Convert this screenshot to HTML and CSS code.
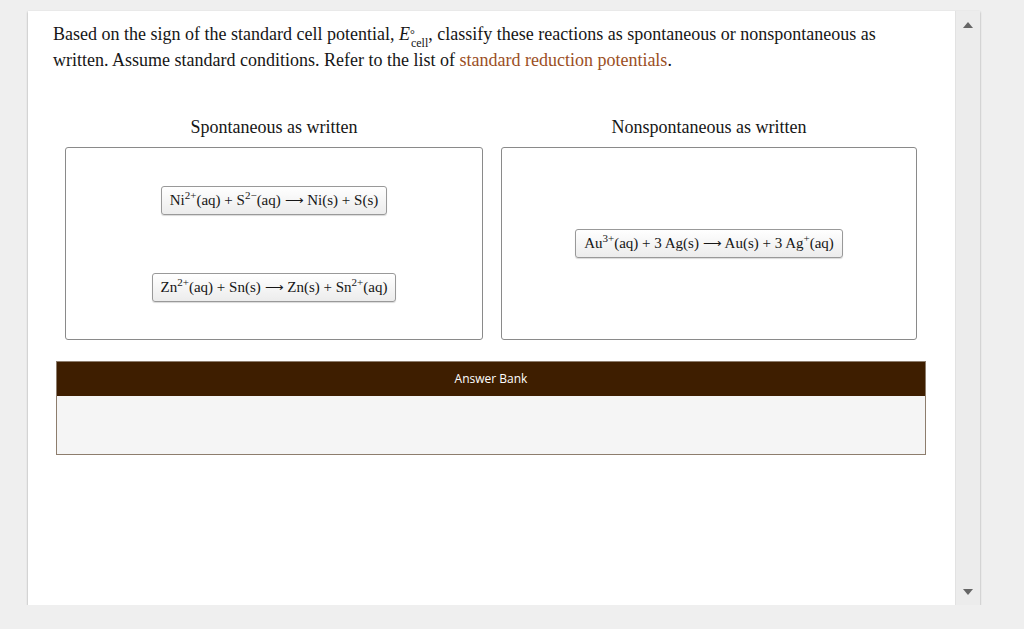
FILE: index.html
```html
<!DOCTYPE html>
<html lang="en">
<head>
    <meta charset="UTF-8">
    <title>Classify Reactions</title>
    <link rel="stylesheet" href="styles.css">
</head>
<body>

    <div class="frame">
        <div class="content">

            <!-- Question -->
            <p class="question">
                Based on the sign of the standard cell potential,
                <span class="ecell"><i>E</i><span class="marks"><span class="deg">°</span><span class="sub">cell</span></span></span>,
                classify these reactions as spontaneous or nonspontaneous as written. Assume standard conditions.
                Refer to the list of <a href="#" class="link">standard reduction potentials</a>.
            </p>

            <!-- Drop zones -->
            <div class="columns">
                <div class="column">
                    <h3 class="col-title">Spontaneous as written</h3>
                    <div class="zone">
                        <div class="chip">Ni<sup>2+</sup>(aq) + S<sup>2&minus;</sup>(aq) <span class="arrow">&#10230;</span> Ni(s) + S(s)</div>
                        <div class="chip">Zn<sup>2+</sup>(aq) + Sn(s) <span class="arrow">&#10230;</span> Zn(s) + Sn<sup>2+</sup>(aq)</div>
                    </div>
                </div>
                <div class="column">
                    <h3 class="col-title">Nonspontaneous as written</h3>
                    <div class="zone">
                        <div class="chip">Au<sup>3+</sup>(aq) + 3 Ag(s) <span class="arrow">&#10230;</span> Au(s) + 3 Ag<sup>+</sup>(aq)</div>
                    </div>
                </div>
            </div>

            <!-- Answer bank -->
            <div class="bank">
                <div class="bank-head">Answer Bank</div>
                <div class="bank-body"></div>
            </div>
        </div>

        <!-- Scrollbar -->
        <div class="scrollbar">
            <span class="tri up"></span>
            <span class="tri down"></span>
        </div>
    </div>

</body>
</html>
```

FILE: styles.css
```css
body {
    margin: 0;
    background: #efefef;
    font-family: "Liberation Serif", "Times New Roman", serif;
    color: #161616;
}

.frame {
    display: flex;
    margin: 11px 0 0 28px;
    width: 952px;
    height: 594px;
    background: #fff;
    box-shadow: 0 1px 2px rgba(0, 0, 0, 0.35);
}

.content {
    flex: 1;
    padding: 11px 0 0 25px;
}

.question {
    margin: 0;
    width: 860px;
    font-size: 18px;
    line-height: 25px;
}

/* E with degree sign over the "cell" subscript */
.ecell i {
    padding-right: 1px;
}

.ecell .marks {
    display: inline-block;
    vertical-align: -7px;
    font-size: 12px;
    line-height: 9px;
}

.ecell .deg,
.ecell .sub {
    display: block;
}

.ecell .deg {
    margin-left: -1px;
}

.link {
    color: #9b4f1f;
    text-decoration: none;
}

.columns {
    display: grid;
    grid-template-columns: 418px 416px;
    gap: 18px;
    margin: 42px 0 0 12px;
}

.col-title {
    margin: 0 0 8px;
    text-align: center;
    font-size: 18px;
    font-weight: normal;
    line-height: 24px;
}

.zone {
    height: 191px;
    border: 1px solid #8a8a8a;
    border-radius: 3px;
    display: flex;
    flex-direction: column;
    align-items: center;
    justify-content: center;
    gap: 58px;
}

.chip {
    height: 27px;
    line-height: 27px;
    padding: 0 8px;
    border: 1px solid #999;
    border-radius: 3px;
    background: linear-gradient(#fff, #ececec);
    box-shadow: 0 1px 1px rgba(0, 0, 0, 0.15);
    font-size: 15px;
    white-space: nowrap;
}

.chip sup {
    font-size: 11px;
    line-height: 0;
}

.arrow {
    font-size: 13px;
}

.bank {
    margin: 21px 0 0 3px;
    width: 868px;
    border: 1px solid #8d7d6d;
}

.bank-head {
    height: 34px;
    line-height: 34px;
    background: #3e1e00;
    color: #fff;
    text-align: center;
    font-family: "Open Sans", sans-serif;
    font-size: 12px;
}

.bank-body {
    height: 58px;
    background: #f5f5f5;
}

.scrollbar {
    width: 24px;
    background: #ececec;
    border-left: 1px solid #e2e2e2;
    display: flex;
    flex-direction: column;
    justify-content: space-between;
    align-items: center;
    padding: 11px 0 10px;
}

.tri {
    width: 0;
    height: 0;
    border-left: 5px solid transparent;
    border-right: 5px solid transparent;
}

.tri.up {
    border-bottom: 6px solid #666;
}

.tri.down {
    border-top: 6px solid #666;
}
```
